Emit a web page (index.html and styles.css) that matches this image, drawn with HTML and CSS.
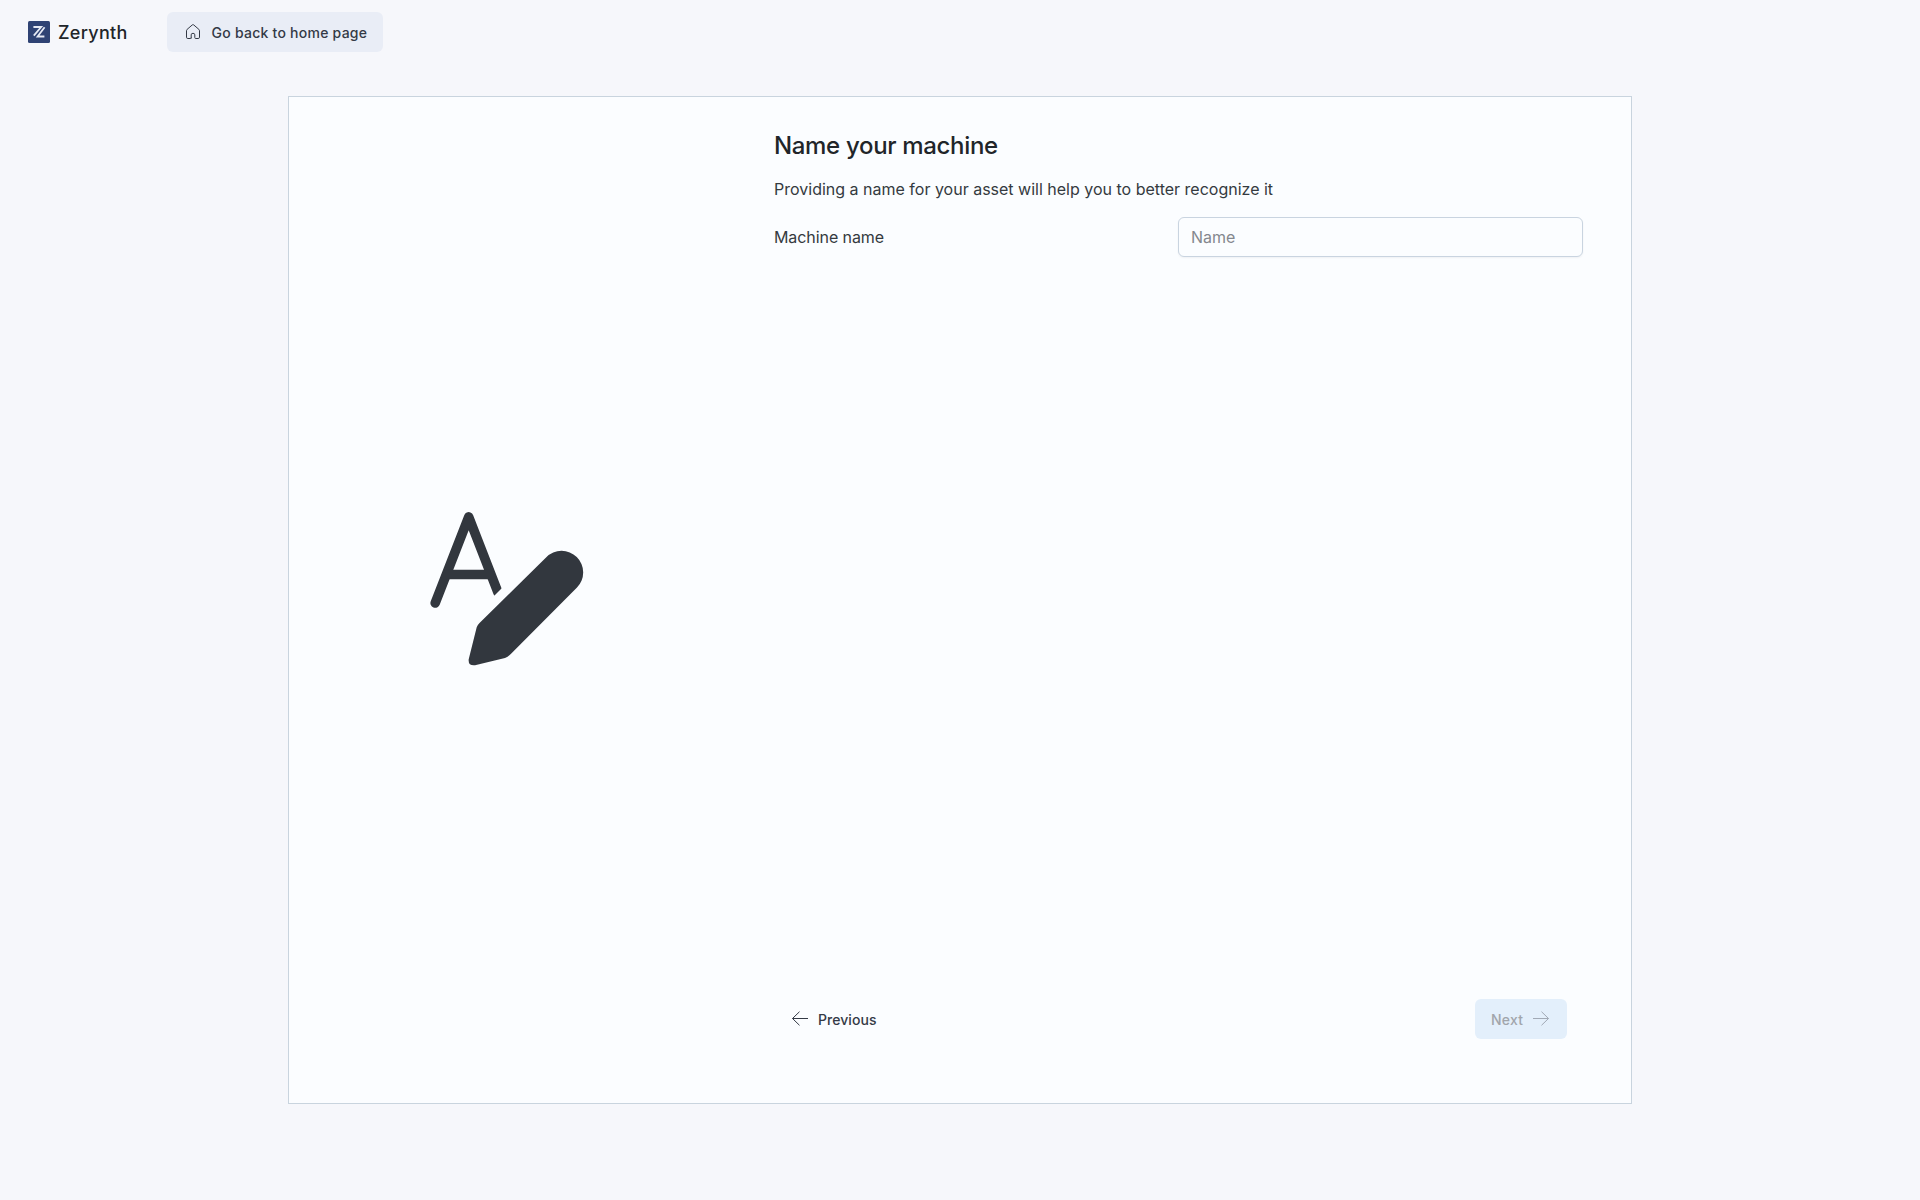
FILE: index.html
```html
<!DOCTYPE html>
<html lang="en">
<head>
<meta charset="utf-8">
<title>Zerynth</title>
<link rel="stylesheet" href="styles.css">
</head>
<body>
<header class="topbar">
  <div class="brand">
    <svg class="brand-mark" viewBox="0 0 22 22" width="22" height="22">
      <rect width="22" height="22" rx="1.5" fill="#2f4374"/>
      <path d="M5.4 6H13.2L5.8 14.6" fill="none" stroke="#e6eaf4" stroke-width="1.8"/>
      <path d="M16.6 6.3L9.6 15.5H16.4" fill="none" stroke="#e6eaf4" stroke-width="1.8"/>
    </svg>
    <span class="brand-name">Zerynth</span>
  </div>
  <button class="btn btn-home" type="button">
    <svg viewBox="0 0 16 16" width="16" height="16" fill="none" stroke="#343a46" stroke-width="1" stroke-linejoin="round">
      <path d="M6.2 14.5V10.8Q6.2 9.3 8 9.3Q9.8 9.3 9.8 10.8V13.6Q9.8 14.5 10.7 14.5H13.2Q14.5 14.5 14.5 13.2V6.8Q14.5 6 13.9 5.4L8.7 .9Q8 .3 7.3 .9L2.1 5.4Q1.5 6 1.5 6.8V13.2Q1.5 14.5 2.8 14.5H5.3Q6.2 14.5 6.2 13.6"/>
    </svg>
    <span class="btn-text">Go back to home page</span>
  </button>
</header>
<main class="card">
  <aside class="art">
    <svg viewBox="0 0 154 154" width="154" height="154" fill="#32373e">
      <clipPath id="leg"><path d="M-5 -5H80V68L60 88L50 100H-5Z"/></clipPath>
      <path d="M5.2 91L38.7 4.9L68 80.5" fill="none" stroke="#32373e" stroke-width="9.6" stroke-linecap="round" stroke-linejoin="round" clip-path="url(#leg)"/>
      <path d="M18 57.8H60V67.3H18Z"/>
      <path d="M116.3 45.3A21.5 21.5 0 0 1 147 75.5L80.8 142Q78 145 75 146L45 153.300Q38 154 38.700 147.300L46.700 115.300Q47.500 113 49.500 111Z"/>
    </svg>
  </aside>
  <section class="step">
    <h1 class="title">Name your machine</h1>
    <p class="hint">Providing a name for your asset will help you to better recognize it</p>
    <div class="field">
      <label class="label" for="name">Machine name</label>
      <input class="input" id="name" type="text" placeholder="Name">
    </div>
    <footer class="actions">
      <button class="btn btn-prev" type="button">
        <svg viewBox="0 0 16 16" width="16" height="16" fill="none" stroke="#343a46"><path d="M.5 7.5H16M7.500 .7L.5 7.500L7.500 14.300"/></svg>
        <span class="btn-text">Previous</span>
      </button>
      <button class="btn btn-next" type="button" disabled>
        <span class="btn-text">Next</span>
        <svg viewBox="0 0 16 16" width="16" height="16" fill="none" stroke="#a1a9b5"><path d="M0 7.500H15.500M8.500 .7L15.500 7.500L8.500 14.300"/></svg>
      </button>
    </footer>
  </section>
</main>
</body>
</html>
```
FILE: styles.css
```css
* { box-sizing: border-box; }

body {
  margin: 0;
  height: 1200px;
  background: #f6f7fb;
  color: #343a40;
  font-family: Inter, "Liberation Sans", sans-serif;
  font-size: 16px;
  overflow: hidden;
}

.topbar {
  display: flex;
  align-items: center;
  height: 64px;
  padding: 0 28px;
}

.brand {
  display: flex;
  align-items: center;
  gap: 8px;
  width: 139px;
}

.brand-mark { display: block; }

.brand-name {
  padding-top: 2px;
  color: #212529;
  font-size: 18px;
  font-weight: 450;
  line-height: 24px;
  letter-spacing: 0.3px;
}

.btn {
  display: flex;
  align-items: center;
  height: 40px;
  border: 0;
  border-radius: 6px;
  background: none;
  color: #343a46;
  font: 500 14px/20px Inter, "Liberation Sans", sans-serif;
  white-space: nowrap;
}

.btn svg { flex: none; display: block; }

.btn-text { padding-top: 2px; }

.btn-home {
  width: 216px;
  padding: 0 0 0 18px;
  gap: 10.5px;
  background: #e9edf6;
  font-weight: 450;
  letter-spacing: 0.25px;
}

.card {
  display: flex;
  width: 1344px;
  height: 1008px;
  margin: 32px auto 0;
  border: 1px solid #c9d4de;
  background: #fbfdff;
}

.art {
  display: flex;
  justify-content: center;
  padding-top: 415px;
  width: 436px;
}

.step {
  display: flex;
  flex-direction: column;
  flex: 1;
  padding: 33px 48px 64px 49px;
}

.title {
  margin: 0;
  color: #212529;
  font-size: 24px;
  font-weight: 500;
  line-height: 32px;
  letter-spacing: -0.33px;
}

.hint {
  margin: 15px 0 16px;
  line-height: 24px;
}

.label { letter-spacing: -0.08px; }

.field {
  display: grid;
  grid-template-columns: 1fr 405px;
  align-items: center;
}

.input {
  height: 40px;
  padding: 0 12px;
  border: 1px solid #c9d4e0;
  border-radius: 6px;
  background: #fbfdff;
  box-shadow: 0 1px 2px rgba(16, 24, 40, 0.05);
  font: 400 16px/24px Inter, "Liberation Sans", sans-serif;
}

.input::placeholder { color: #84888e; }

.actions {
  display: flex;
  justify-content: space-between;
  margin-top: auto;
  padding: 0 16px 0 18px;
}

.btn-prev {
  padding: 0;
  gap: 10px;
  letter-spacing: 0.05px;
}

.btn-next {
  width: 92px;
  padding: 0 0 0 16px;
  gap: 9.5px;
  background: #e3effb;
  color: #a1a5ab;
  letter-spacing: 0.25px;
}
```
